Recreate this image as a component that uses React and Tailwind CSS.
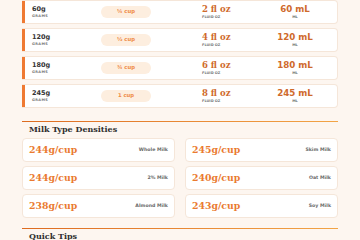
import React from 'react';

const rows = [
  { g: '60g', cup: '¼ cup', oz: '2 fl oz', ml: '60 mL' },
  { g: '120g', cup: '½ cup', oz: '4 fl oz', ml: '120 mL' },
  { g: '180g', cup: '¾ cup', oz: '6 fl oz', ml: '180 mL' },
  { g: '245g', cup: '1 cup', oz: '8 fl oz', ml: '245 mL' },
];

const milks = [
  { v: '244g/cup', name: 'Whole Milk' },
  { v: '245g/cup', name: 'Skim Milk' },
  { v: '244g/cup', name: '2% Milk' },
  { v: '240g/cup', name: 'Oat Milk' },
  { v: '238g/cup', name: 'Almond Milk' },
  { v: '243g/cup', name: 'Soy Milk' },
];

function SectionTitle({ children }) {
  return (
    <div>
      <div className="h-px bg-gradient-to-r from-[#dd6b20] to-[#f2a446]" />
      <h2 className="pl-[7px] pt-[2px] text-[8px] leading-[10px] font-bold text-[#2f2f2f] font-['DejaVu_Serif',serif]">
        {children}
      </h2>
    </div>
  );
}

export default function App() {
  return (
    <div className="min-h-screen bg-[#fdf6f0] font-['DejaVu_Sans',sans-serif]">
      <div className="mx-auto w-[316px]">
        <div className="flex flex-col gap-[4px]">
          {rows.map((r) => (
            <div
              key={r.g}
              className="flex h-[24px] items-center rounded-r-[4px] border border-l-0 border-[#f5e6d9] bg-white"
            >
              <div className="h-full w-[3px] bg-[#ef7a33]" />
              <div className="flex w-[76px] flex-col pl-[7px] leading-none">
                <span className="text-[6.5px] font-bold text-[#333]">{r.g}</span>
                <span className="mt-[2.5px] text-[3.5px] font-bold tracking-[0.4px] text-[#777]">GRAMS</span>
              </div>
              <div className="flex h-[12.5px] w-[50px] items-center justify-center rounded-full bg-[#fdeedf] text-[5.3px] font-bold text-[#ef8a45]">
                {r.cup}
              </div>
              <div className="ml-[51px] flex w-[60px] flex-col leading-none">
                <span className="text-[8.5px] font-bold text-[#cf6a2c] font-['DejaVu_Serif',serif]">{r.oz}</span>
                <span className="mt-[2px] text-[3.5px] font-bold text-[#777]">FLUID OZ</span>
              </div>
              <div className="flex w-[66px] flex-col items-center leading-none">
                <span className="text-[8.7px] font-bold text-[#cf6a2c]">{r.ml}</span>
                <span className="mt-[2px] text-[3.5px] font-bold text-[#777]">ML</span>
              </div>
            </div>
          ))}
        </div>

        <div className="mt-[13px]">
          <SectionTitle>Milk Type Densities</SectionTitle>
          <div className="mt-[4px] grid grid-cols-2 gap-x-[10px] gap-y-[4px]">
            {milks.map((m) => (
              <div
                key={m.name}
                className="flex h-[24px] items-center justify-between rounded-[4px] border border-[#f5e6d9] bg-white px-[6px]"
              >
                <span className="text-[9.3px] font-bold leading-none text-[#ea7a30] font-['DejaVu_Serif',serif]">{m.v}</span>
                <span className="text-[4.7px] font-bold leading-none text-[#6b6b6b]">{m.name}</span>
              </div>
            ))}
          </div>
        </div>

        <div className="mt-[10px]">
          <SectionTitle>Quick Tips</SectionTitle>
        </div>
      </div>
    </div>
  );
}
